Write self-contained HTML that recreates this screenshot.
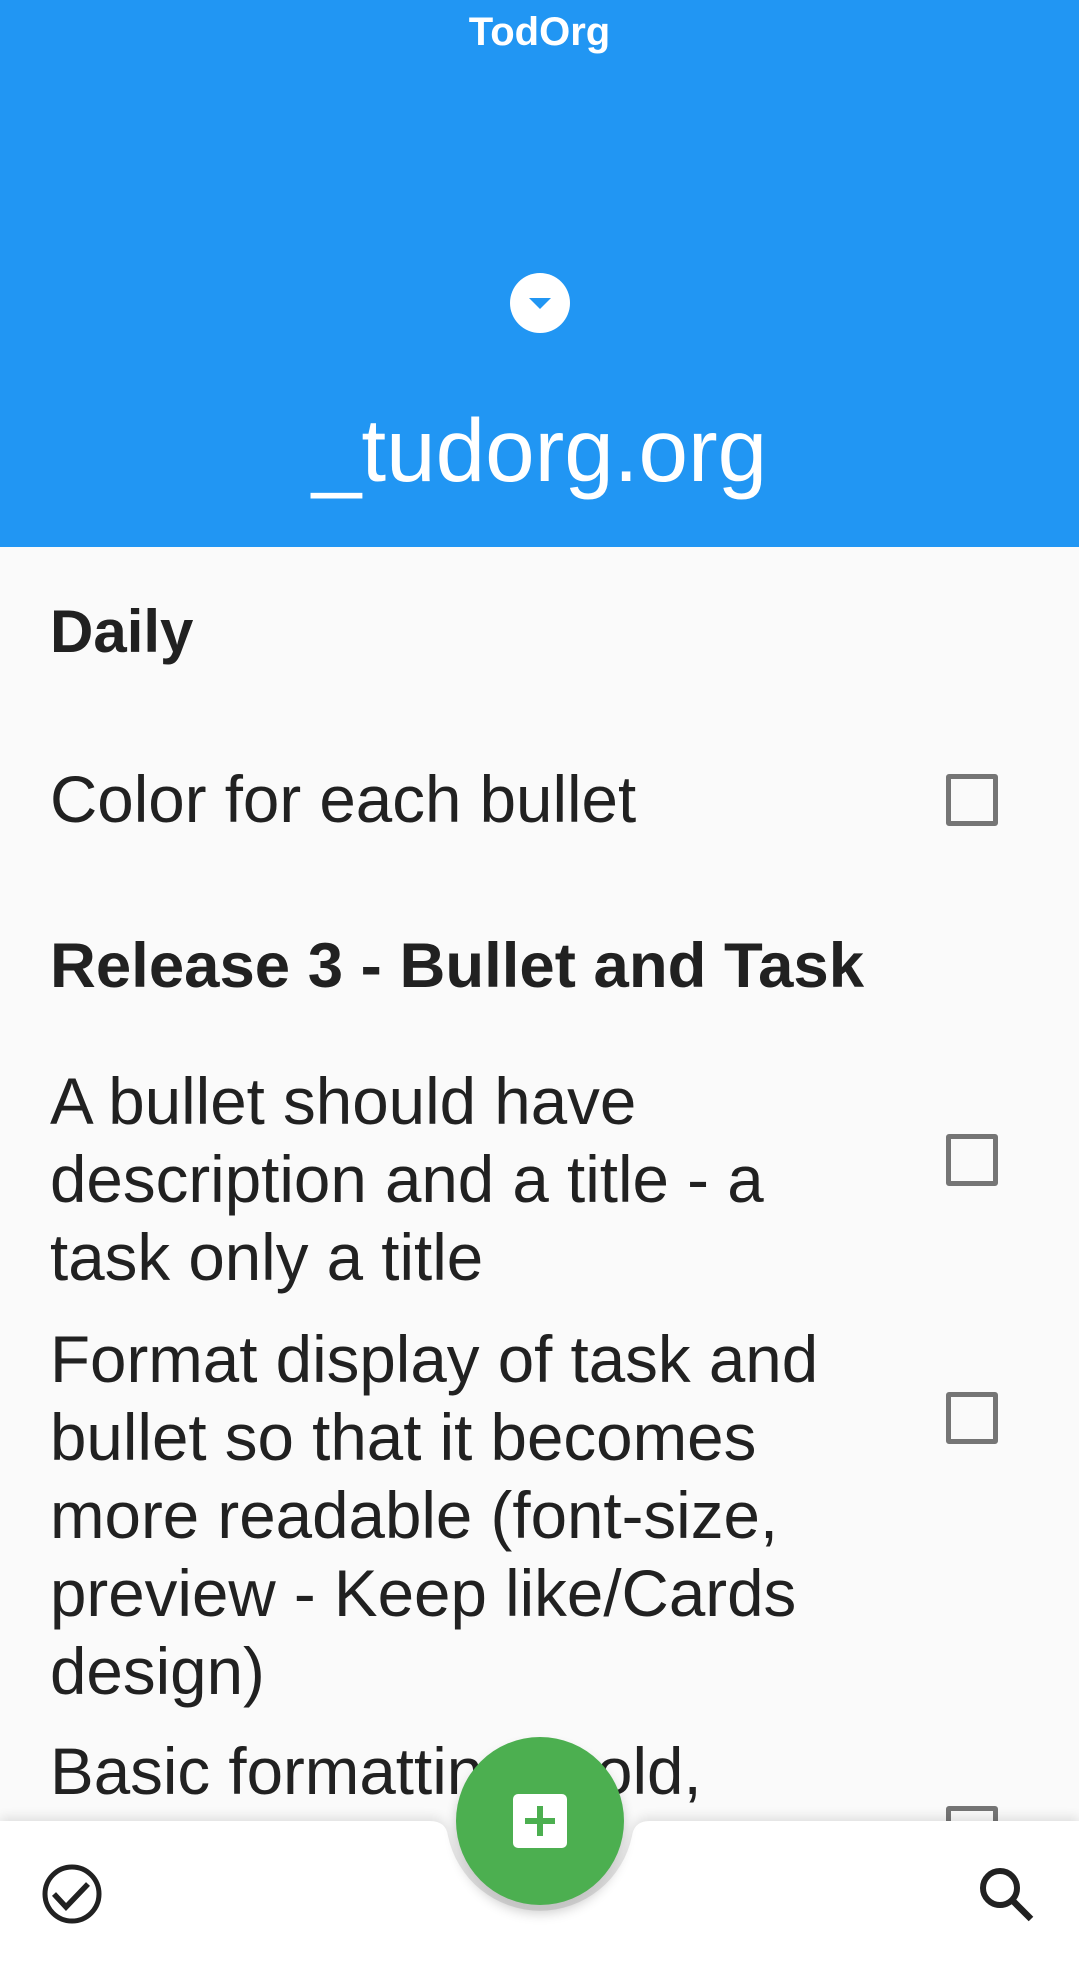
<!DOCTYPE html>
<html><head><meta charset="utf-8">
<style>
*{margin:0;padding:0;box-sizing:border-box}
html,body{width:1079px;height:1962px;overflow:hidden;background:#fafafa;font-family:"Liberation Sans",sans-serif;color:#212121}
.hdr{position:absolute;left:0;top:0;width:1079px;height:547px;background:#2196F3}
.t{position:absolute;white-space:nowrap}
.app{left:0;width:1079px;text-align:center;top:9px;font-size:40px;line-height:46px;font-weight:bold;color:#fff}
.circ{position:absolute;left:510px;top:273px;width:60px;height:60px;border-radius:50%;background:#fff}
.circ:after{content:"";position:absolute;left:19px;top:25px;border-left:11px solid transparent;border-right:11px solid transparent;border-top:11px solid #2196F3}
.org{left:0;width:1079px;text-align:center;top:400px;font-size:89px;line-height:100px;color:#fff}
.h{font-size:60px;line-height:70px;font-weight:bold;left:50px}
.p{font-size:65.5px;line-height:78px;left:50px}
.cb{position:absolute;left:946px;width:52px;height:52px;border:5px solid #757575;border-radius:3px}
</style></head><body>
<div class="hdr"></div>
<div class="t app">TodOrg</div>
<div class="circ"></div>
<div class="t org">_tudorg.org</div>

<div class="t h" style="top:597px">Daily</div>
<div class="t p" style="top:761px">Color for each bullet</div>
<div class="cb" style="top:774px"></div>
<div class="t h" style="top:931px;font-size:63.5px">Release 3 - Bullet and Task</div>
<div class="t p" style="top:1063px">A bullet should have<br>description and a title - a<br>task only a title</div>
<div class="cb" style="top:1134px"></div>
<div class="t p" style="top:1321px">Format display of task and<br>bullet so that it becomes<br>more readable (font-size,<br>preview - Keep like/Cards<br>design)</div>
<div class="cb" style="top:1392px"></div>
<div class="t p" style="top:1733px">Basic formatting (bold,</div>
<div class="cb" style="top:1806px"></div>

<svg style="position:absolute;left:0;top:0" width="1079" height="1962">
<defs>
<filter id="sh" x="-20%" y="-20%" width="140%" height="140%"><feGaussianBlur stdDeviation="6"/></filter>
</defs>
<path d="M0 1821 L430 1821 Q446 1821 448 1836 A94 94 0 0 0 632 1836 Q634 1821 650 1821 L1079 1821 L1079 1962 L0 1962 Z" fill="#000" opacity="0.12" filter="url(#sh)" transform="translate(0,-3)"/>
<path d="M0 1821 L430 1821 Q446 1821 448 1836 A94 94 0 0 0 632 1836 Q634 1821 650 1821 L1079 1821 L1079 1962 L0 1962 Z" fill="#fff"/>
<circle cx="540" cy="1829" r="84" fill="#000" opacity="0.2" filter="url(#sh)"/>
<circle cx="540" cy="1821" r="84" fill="#4CAF50"/>
<rect x="513" y="1794" width="54" height="54" rx="5" fill="#fff"/>
<path d="M540 1806 V1836 M525 1821 H555" stroke="#4CAF50" stroke-width="6"/>
<circle cx="72" cy="1894" r="27" fill="none" stroke="#212121" stroke-width="5"/>
<path d="M54 1894 L66 1907 L88 1884" fill="none" stroke="#212121" stroke-width="5.5"/>
<circle cx="1000" cy="1888" r="17" fill="none" stroke="#212121" stroke-width="6"/>
<path d="M1012 1900 L1031 1919" stroke="#212121" stroke-width="6.5"/>
</svg>
</body></html>
